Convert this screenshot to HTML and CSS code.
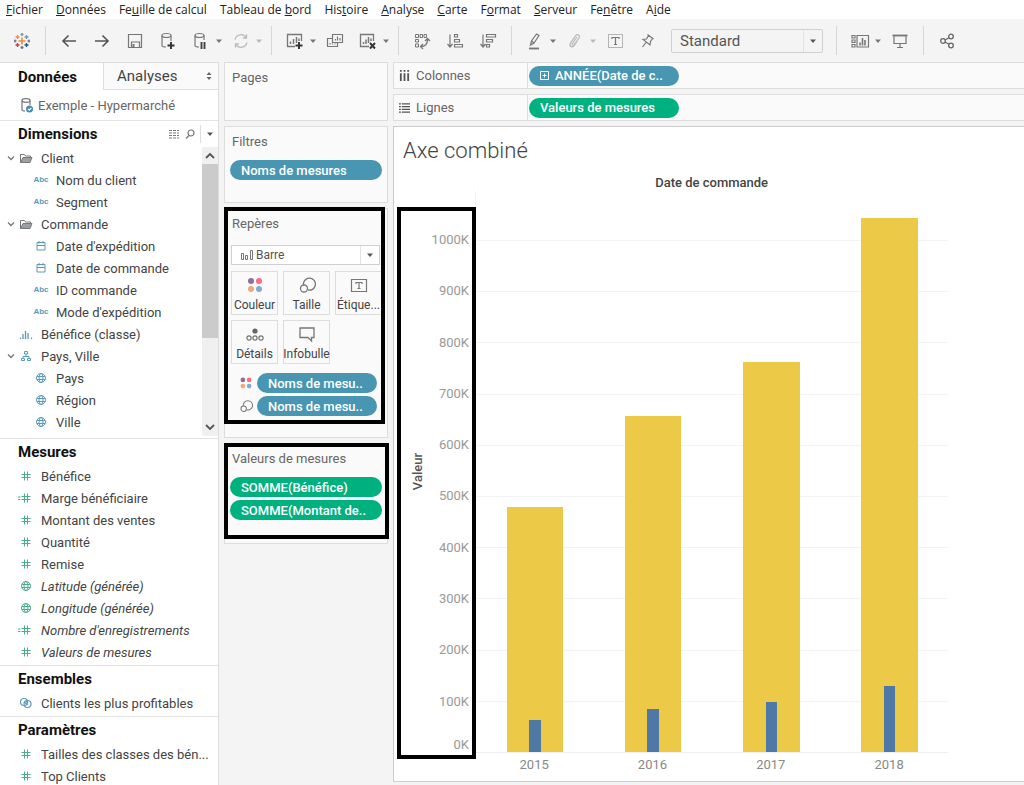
FILE: index.html
```html
<!DOCTYPE html>
<html lang="fr">
<head>
    <meta charset="UTF-8">
    <meta name="viewport" content="width=device-width, initial-scale=1.0">
    <title>Axe combiné</title>
    <link rel="stylesheet" href="styles.css">
</head>
<body>
    <svg class="sprite" aria-hidden="true">
        <symbol id="i-caret" viewBox="0 0 8 8"><path d="M1 2.5h6L4 6z" fill="currentColor"/></symbol>
        <symbol id="i-chevron" viewBox="0 0 8 8"><path d="M1 2.500L4 5.500l3-3" fill="none" stroke="#777" stroke-width="1.300"/></symbol>
        <symbol id="i-folder" viewBox="0 0 14 12"><path d="M1.500 10V2.500h4l1 1.500h5v1.500" fill="none" stroke="#777"/><path d="M1.500 10.500l2.500-5h9l-2 5z" fill="#9aa0a5" stroke="#777"/></symbol>
        <symbol id="i-date" viewBox="0 0 12 12"><path d="M2 2.500h8V10H2zM2 5.500h8M4 1v2.500M8 1v2.500" fill="none" stroke="currentColor"/></symbol>
        <symbol id="i-bins" viewBox="0 0 14 12"><path d="M1.500 11V9.500M4 11V6M6.500 11V3M9 11V5M12.500 11V9.500" fill="none" stroke="currentColor" stroke-width="1.300"/></symbol>
        <symbol id="i-hier" viewBox="0 0 12 12"><path d="M4.500 1.500h3v2.500h-3zM1.500 8.500h3v2h-3zM7.500 8.500h3v2h-3zM6 4v2.500M3 8.500v-2h6v2" fill="none" stroke="currentColor"/></symbol>
        <symbol id="i-globe" viewBox="0 0 12 12"><g fill="none" stroke="currentColor"><circle cx="6" cy="6" r="4.500"/><ellipse cx="6" cy="6" rx="2" ry="4.500"/><path d="M2 4.500h8M2 7.500h8"/></g></symbol>
        <symbol id="i-hash" viewBox="0 0 12 12"><path d="M4.500 1.500v9M7.500 1.500v9M1.500 4.500h9M1.500 7.500h9" fill="none" stroke="currentColor"/></symbol>
        <symbol id="i-calc" viewBox="0 0 18 12"><path d="M7.500 1.500v9M10.500 1.500v9M4.500 4.500h9M4.500 7.500h9M1 5h2.500M1 7.500h2.500" fill="none" stroke="currentColor"/></symbol>
        <symbol id="i-set" viewBox="0 0 14 12"><g fill="none" stroke="currentColor" stroke-width="1.200"><circle cx="5" cy="5" r="3.500"/><circle cx="8.500" cy="7" r="3.500"/><path d="M5.500 5l3 3M7 4l2 2"/></g></symbol>
        <symbol id="i-size" viewBox="0 0 18 18"><g fill="none" stroke="#777" stroke-width="1.300"><path d="M5.500 9a6 6 0 1 1 4.500 5"/><circle cx="6" cy="12.500" r="3.500"/></g></symbol>
        <symbol id="i-color" viewBox="0 0 18 18"><circle cx="5" cy="5" r="3" fill="#8a6f9e"/><circle cx="13" cy="5" r="3" fill="#ff6b82"/><circle cx="5" cy="13" r="3" fill="#f5a67b"/><circle cx="13" cy="13" r="3" fill="#84a9d1"/></symbol>
    </svg>

    <div class="app">
        <nav class="menubar">
            <a href="#"><u>F</u>ichier</a>
            <a href="#"><u>D</u>onnées</a>
            <a href="#">Fe<u>u</u>ille de calcul</a>
            <a href="#">Tableau de <u>b</u>ord</a>
            <a href="#">His<u>t</u>oire</a>
            <a href="#"><u>A</u>nalyse</a>
            <a href="#"><u>C</u>arte</a>
            <a href="#">F<u>o</u>rmat</a>
            <a href="#"><u>S</u>erveur</a>
            <a href="#">Fe<u>n</u>être</a>
            <a href="#">A<u>i</u>de</a>
        </nav>

        <div class="toolbar">
            <button class="tool" aria-label="Accueil">
                <svg viewBox="0 0 20 20" fill="none" stroke-width="1.300">
                    <path d="M10 6.500v7M6.500 10h7" stroke="#eb8b3c" stroke-width="1.600"/>
                    <path d="M5.500 4v4M3.500 6h4" stroke="#eb8b3c"/><path d="M14.500 4v4M12.500 6h4" stroke="#6b9bb3"/>
                    <path d="M5.500 12v4M3.500 14h4" stroke="#c8374f"/><path d="M14.500 12v4M12.500 14h4" stroke="#1f5a86"/>
                    <path d="M10 2v3M8.500 3.500h3" stroke="#7b94ad"/><path d="M10 15v3M8.500 16.500h3" stroke="#6d6ba0"/>
                    <path d="M3 8.500v3M2 10h2.500" stroke="#7b6f9e"/><path d="M17 8.500v3M15.500 10H18" stroke="#7b6f9e"/>
                </svg>
            </button>
            <span class="sep"></span>
            <button class="tool" aria-label="Annuler"><svg viewBox="0 0 20 20" fill="none" stroke="#555" stroke-width="1.600"><path d="M17 10H4M9.500 4.500L4 10l5.500 5.500"/></svg></button>
            <button class="tool" aria-label="Rétablir"><svg viewBox="0 0 20 20" fill="none" stroke="#555" stroke-width="1.600"><path d="M3 10h13M10.500 4.500L16 10l-5.500 5.500"/></svg></button>
            <button class="tool" aria-label="Enregistrer"><svg viewBox="0 0 20 20" fill="none" stroke="#777" stroke-width="1.200"><path d="M3.500 3.500h13v13h-13zM6.500 16v-5h8v5"/><path d="M8.500 13v3" stroke-width="2"/></svg></button>
            <button class="tool" aria-label="Nouvelle source de données"><svg viewBox="0 0 20 20" fill="none" stroke="#777" stroke-width="1.200"><ellipse cx="8.500" cy="4.500" rx="4.500" ry="2"/><path d="M4 4.500v10c0 1 2 1.500 4 1.500M13 4.500V10"/><path d="M13 11v7M9.500 14.500h7" stroke="#333" stroke-width="1.900"/></svg></button>
            <button class="tool" aria-label="Suspendre"><svg viewBox="0 0 20 20" fill="none" stroke="#777" stroke-width="1.200"><ellipse cx="8.500" cy="4.500" rx="4.500" ry="2"/><path d="M4 4.500v10c0 1 2 1.500 4 1.500M13 4.500V9"/><path d="M10.500 11v7M13.500 11v7" stroke="#444" stroke-width="1.900"/></svg></button>
            <button class="caret" aria-label="Options"><svg><use href="#i-caret"/></svg></button>
            <button class="tool" aria-label="Actualiser"><svg viewBox="0 0 20 20" fill="none" stroke="#bbb" stroke-width="1.300"><path d="M4 8.500a6.200 6.200 0 0 1 11.500-1.500M16 11.500A6.200 6.200 0 0 1 4.500 13M15.500 3.500V7H12M4.500 16.500V13H8"/></svg></button>
            <button class="caret faded" aria-label="Options"><svg><use href="#i-caret"/></svg></button>
            <span class="sep"></span>
            <button class="tool" aria-label="Nouvelle feuille"><svg viewBox="0 0 20 20" fill="none" stroke="#777" stroke-width="1.300"><path d="M10 15.500H2.500v-12h14V10"/><path d="M5.500 13v-2.500M8.500 13V8M11.500 12V6M14 10V7.500" stroke-width="1.500"/><path d="M14 11v7M10.500 14.500h7" stroke="#333" stroke-width="1.900"/></svg></button>
            <button class="caret" aria-label="Options"><svg><use href="#i-caret"/></svg></button>
            <button class="tool" aria-label="Dupliquer"><svg viewBox="0 0 20 20" fill="none" stroke="#777" stroke-width="1.200"><path d="M7.500 3.500h10v8h-10zM7 7.500H2.500v8h10v-3.500M10.500 9.500V8M12.500 9.500v-4M15 9.500V7M5 13.500V12M7.500 13.500v-1M10 13.500v-1"/></svg></button>
            <button class="tool" aria-label="Effacer la feuille"><svg viewBox="0 0 20 20" fill="none" stroke="#777" stroke-width="1.300"><path d="M11 15.500H2.500v-12h13V10"/><path d="M5.500 13v-2M8 13V8.500M10.500 12V6M13 10V7.500" stroke-width="1.500"/><path d="M12 12l5 5.500M17 12l-5 5.500" stroke="#333" stroke-width="1.900"/></svg></button>
            <button class="caret" aria-label="Options"><svg><use href="#i-caret"/></svg></button>
            <span class="sep"></span>
            <button class="tool" aria-label="Permuter"><svg viewBox="0 0 20 20" fill="none" stroke="#777"><path d="M3.500 3.500h3v3h-3zM8 3.500h2.500v3H8zM12 3.500h2.500v3H12zM3.500 8.500h3V11h-3zM3.500 13h3v3h-3z"/><path d="M9 15.500c4 0 6.500-2 6.500-7M13 10l2.500-2.500L18 10M11 13l-2.500 2.500L11 18" stroke-width="1.300"/></svg></button>
            <button class="tool" aria-label="Tri croissant"><svg viewBox="0 0 20 20" fill="none" stroke="#777" stroke-width="1.200"><path d="M5 3.500V16M2.500 13L5 16l2.500-3M9.500 3.500h3v2.500h-3zM9.500 8.500h5V11h-5zM9.500 13.500h8V16h-8z"/></svg></button>
            <button class="tool" aria-label="Tri décroissant"><svg viewBox="0 0 20 20" fill="none" stroke="#777" stroke-width="1.200"><path d="M5 3.500V16M2.500 13L5 16l2.500-3M8.500 3.500h9V6h-9zM8.500 8.500h6V11h-6zM8.500 13.500h3V16h-3z"/></svg></button>
            <span class="sep"></span>
            <button class="tool" aria-label="Surligner"><svg viewBox="0 0 20 20" fill="none" stroke="#777" stroke-width="1.200"><path d="M5.500 14l1-4 5-7 2.500 1.500-5 7.500zM6.500 10L9 12"/><path d="M4 17.500h10" stroke-width="1.800"/></svg></button>
            <button class="caret" aria-label="Options"><svg><use href="#i-caret"/></svg></button>
            <button class="tool" aria-label="Grouper"><svg viewBox="0 0 20 20" fill="none" stroke="#bbb" stroke-width="1.300"><path d="M12 6l-4.500 6.500c-.8 1.500.8 2.500 1.800 1.200L14 7c1.500-2.500-1.500-4.500-3.300-2.300L5.500 12c-1.800 3 1.500 5 3.500 2.800l3-4.300"/></svg></button>
            <button class="caret faded" aria-label="Options"><svg><use href="#i-caret"/></svg></button>
            <button class="tool" aria-label="Étiquettes"><svg viewBox="0 0 20 20" fill="none" stroke="#777"><path d="M3.500 3.500h14v13h-14z" stroke-dasharray="1 1"/><path d="M7 8V6.500h7V8M10.500 6.500v7M9 13.500h3" stroke-width="1.200"/></svg></button>
            <button class="tool" aria-label="Épingler"><svg viewBox="0 0 20 20" fill="none" stroke="#777" stroke-width="1.200"><path d="M9.500 3.500l6 4.500M10.500 4.500L8.500 8 5 8.500l7 5.500.500-3.500L14.500 7.500M8 11.500L4.500 16"/></svg></button>
            <div class="select fit">
                <select aria-label="Ajuster"><option>Standard</option></select>
                <svg><use href="#i-caret"/></svg>
            </div>
            <span class="sep"></span>
            <button class="tool" aria-label="Montrer/Masquer les fiches"><svg viewBox="0 0 20 20" fill="none" stroke="#777" stroke-width="1.200"><path d="M2 4.500h3V7H2zM2 9h3v2.500H2zM2 13.500h3V16H2zM7 4.500h11.500V16H7z"/><path d="M10 14.500v-3M12.500 14.500V7M15 14.500V9" stroke-width="1.600"/></svg></button>
            <button class="caret" aria-label="Options"><svg><use href="#i-caret"/></svg></button>
            <button class="tool" aria-label="Mode de présentation"><svg viewBox="0 0 20 20" fill="none" stroke="#777" stroke-width="1.200"><path d="M4 5v7.500h12V5M10 12.500v4M7 16.500h6"/><path d="M2.500 4.500h15" stroke-width="1.800"/></svg></button>
            <span class="sep"></span>
            <button class="tool" aria-label="Partager"><svg viewBox="0 0 20 20" fill="none" stroke="#666" stroke-width="1.300"><circle cx="6" cy="10" r="2.300"/><circle cx="14" cy="5.500" r="2.300"/><circle cx="14" cy="14.500" r="2.300"/><path d="M8 9l4-2.300M8 11l4 2.300"/></svg></button>
        </div>

        <div class="workspace">
            <aside class="data-pane">
                <div class="tabs">
                    <button class="tab active">Données</button>
                    <button class="tab">Analyses
                        <svg viewBox="0 0 8 12" width="8" height="12"><path d="M1.500 5L4 2l2.500 3zM1.500 7L4 10l2.500-3z" fill="#666"/></svg>
                    </button>
                </div>
                <div class="source">
                    <svg viewBox="0 0 14 16" width="14" height="16" fill="none" stroke="#777" stroke-width="1.200"><ellipse cx="6" cy="3.500" rx="4" ry="1.800"/><path d="M2 3.500v9c0 1 1.500 1.500 3 1.500M10 3.500V8"/><circle cx="9.500" cy="12" r="3.500" fill="#3e8bb3" stroke="none"/><path d="M8 12l1.200 1.200L11.300 11" stroke="#fff"/></svg>
                    Exemple - Hypermarché
                </div>

                <section class="group dimensions">
                    <h2>Dimensions
                        <span class="actions">
                            <svg viewBox="0 0 12 10" width="12" height="10" stroke="#777" stroke-width="1.200"><path d="M1 1.500h10M1 4h10M1 6.500h10M1 9h10" stroke-dasharray="3 1"/></svg>
                            <svg viewBox="0 0 10 10" width="10" height="10" fill="none" stroke="#777" stroke-width="1.200"><circle cx="6" cy="4" r="3"/><path d="M4 6.500L1 9.500"/></svg>
                            <button class="menu" aria-label="Menu"><svg><use href="#i-caret"/></svg></button>
                        </span>
                    </h2>
                    <div class="scrollbox">
                        <ul class="fields dim">
                            <li class="parent"><svg class="arrow"><use href="#i-chevron"/></svg><svg class="icon"><use href="#i-folder"/></svg>Client</li>
                            <li class="child"><span class="icon">Abc</span>Nom du client</li>
                            <li class="child"><span class="icon">Abc</span>Segment</li>
                            <li class="parent"><svg class="arrow"><use href="#i-chevron"/></svg><svg class="icon"><use href="#i-folder"/></svg>Commande</li>
                            <li class="child"><svg class="icon"><use href="#i-date"/></svg>Date d'expédition</li>
                            <li class="child"><svg class="icon"><use href="#i-date"/></svg>Date de commande</li>
                            <li class="child"><span class="icon">Abc</span>ID commande</li>
                            <li class="child"><span class="icon">Abc</span>Mode d'expédition</li>
                            <li><svg class="icon"><use href="#i-bins"/></svg>Bénéfice (classe)</li>
                            <li class="parent"><svg class="arrow"><use href="#i-chevron"/></svg><svg class="icon"><use href="#i-hier"/></svg>Pays, Ville</li>
                            <li class="child"><svg class="icon"><use href="#i-globe"/></svg>Pays</li>
                            <li class="child"><svg class="icon"><use href="#i-globe"/></svg>Région</li>
                            <li class="child"><svg class="icon"><use href="#i-globe"/></svg>Ville</li>
                        </ul>
                        <div class="scrollbar">
                            <svg viewBox="0 0 16 17"><path d="M4 11l4-4 4 4" fill="none" stroke="#555" stroke-width="1.800"/></svg>
                            <div class="thumb"></div>
                            <svg viewBox="0 0 16 17"><path d="M4 6l4 4 4-4" fill="none" stroke="#555" stroke-width="1.800"/></svg>
                        </div>
                    </div>
                </section>

                <section class="group">
                    <h2>Mesures</h2>
                    <ul class="fields mes">
                        <li><svg class="icon"><use href="#i-hash"/></svg>Bénéfice</li>
                        <li><svg class="icon"><use href="#i-calc"/></svg>Marge bénéficiaire</li>
                        <li><svg class="icon"><use href="#i-hash"/></svg>Montant des ventes</li>
                        <li><svg class="icon"><use href="#i-hash"/></svg>Quantité</li>
                        <li><svg class="icon"><use href="#i-hash"/></svg>Remise</li>
                        <li class="generated"><svg class="icon"><use href="#i-globe"/></svg>Latitude (générée)</li>
                        <li class="generated"><svg class="icon"><use href="#i-globe"/></svg>Longitude (générée)</li>
                        <li class="generated"><svg class="icon"><use href="#i-calc"/></svg>Nombre d'enregistrements</li>
                        <li class="generated"><svg class="icon"><use href="#i-hash"/></svg>Valeurs de mesures</li>
                    </ul>
                </section>

                <section class="group">
                    <h2>Ensembles</h2>
                    <ul class="fields dim">
                        <li><svg class="icon"><use href="#i-set"/></svg>Clients les plus profitables</li>
                    </ul>
                </section>

                <section class="group">
                    <h2>Paramètres</h2>
                    <ul class="fields mes">
                        <li><svg class="icon"><use href="#i-hash"/></svg>Tailles des classes des bén...</li>
                        <li><svg class="icon"><use href="#i-hash"/></svg>Top Clients</li>
                    </ul>
                </section>
            </aside>

            <div class="cards">
                <section class="card pages"><h3>Pages</h3></section>
                <section class="card filters">
                    <h3>Filtres</h3>
                    <button class="pill blue">Noms de mesures</button>
                </section>
                <section class="card marks">
                    <h3>Repères</h3>
                    <div class="select mark-type">
                        <svg class="bars" viewBox="0 0 14 12" fill="none" stroke="#777"><path d="M1.500 4.500h2v6h-2zM5.500 6.500h2v4h-2zM10.500 1.500h2v9h-2z"/></svg>
                        <select aria-label="Type de repère"><option>Barre</option></select>
                        <svg><use href="#i-caret"/></svg>
                    </div>
                    <div class="mark-buttons">
                        <button><svg><use href="#i-color"/></svg>Couleur</button>
                        <button><svg><use href="#i-size"/></svg>Taille</button>
                        <button><svg viewBox="0 0 18 18" fill="none" stroke="#777" stroke-width="1.200"><path d="M1.500 3.500h15v12h-15zM6 8V6.500h6V8M9 6.500V12M7.500 12.500h3"/></svg>Étique...</button>
                        <button><svg viewBox="0 0 18 18" fill="none" stroke="#777" stroke-width="1.200"><circle cx="9" cy="6" r="2.600" fill="#666" stroke="none"/><circle cx="3" cy="13" r="2.100"/><circle cx="9" cy="13" r="2.100"/><circle cx="15" cy="13" r="2.100"/></svg>Détails</button>
                        <button><svg viewBox="0 0 18 18" fill="none" stroke="#777" stroke-width="1.300"><path d="M2 3h14v9.500h-2.500v3.500L10 12.500H2z"/></svg>Infobulle</button>
                    </div>
                    <div class="mark-field"><svg><use href="#i-color"/></svg><button class="pill blue">Noms de mesu..</button></div>
                    <div class="mark-field"><svg><use href="#i-size"/></svg><button class="pill blue">Noms de mesu..</button></div>
                </section>
                <section class="card values">
                    <h3>Valeurs de mesures</h3>
                    <button class="pill green">SOMME(Bénéfice)</button>
                    <button class="pill green">SOMME(Montant de..</button>
                </section>
            </div>

            <main class="view">
                <div class="shelf">
                    <div class="shelf-name">
                        <svg viewBox="0 0 12 12" stroke="#555" stroke-width="2"><path d="M2 3.500V12M6 3.500V12M10 3.500V12M2 0v2M6 0v2M10 0v2"/></svg>
                        Colonnes
                    </div>
                    <button class="pill blue"><svg viewBox="0 0 9 9" fill="none" stroke="#fff"><path d="M.5.5h8v8h-8zM2.500 4.500h4M4.500 2.500v4"/></svg>ANNÉE(Date de c..</button>
                </div>
                <div class="shelf">
                    <div class="shelf-name">
                        <svg viewBox="0 0 12 12" stroke="#555" stroke-width="1.500"><path d="M0 2h2M0 5h2M0 8h2M0 11h2M3 2h9M3 5h9M3 8h9M3 11h9"/></svg>
                        Lignes
                    </div>
                    <button class="pill green">Valeurs de mesures</button>
                </div>

                <div class="sheet">
                    <h1>Axe combiné</h1>
                    <div class="chart">
                        <div class="chart-title">Date de commande</div>
                        <div class="y-axis">
                            <div class="y-name">Valeur</div>
                            <div class="ticks">
                                <div><span>1000K</span></div>
                                <div><span>900K</span></div>
                                <div><span>800K</span></div>
                                <div><span>700K</span></div>
                                <div><span>600K</span></div>
                                <div><span>500K</span></div>
                                <div><span>400K</span></div>
                                <div><span>300K</span></div>
                                <div><span>200K</span></div>
                                <div><span>100K</span><span>0K</span></div>
                            </div>
                        </div>
                        <div class="plot">
                            <div class="gridlines"><i></i><i></i><i></i><i></i><i></i><i></i><i></i><i></i><i></i><i></i></div>
                            <div class="bars-area">
                                <div class="year"><div class="sales" style="height: 43.6%"><div class="profit" style="height: 13.1%"></div></div></div>
                                <div class="year"><div class="sales" style="height: 59.9%"><div class="profit" style="height: 12.8%"></div></div></div>
                                <div class="year"><div class="sales" style="height: 69.6%"><div class="profit" style="height: 12.9%"></div></div></div>
                                <div class="year"><div class="sales" style="height: 95.2%"><div class="profit" style="height: 12.4%"></div></div></div>
                            </div>
                        </div>
                        <div class="x-axis"><span>2015</span><span>2016</span><span>2017</span><span>2018</span></div>
                    </div>
                </div>
            </main>
        </div>
    </div>
</body>
</html>
```
FILE: styles.css
```css
* {
    box-sizing: border-box;
}
body {
    margin: 0;
    font-family: Roboto, Arial, sans-serif;
    font-size: 13px;
    color: #444;
    background: #f4f4f4;
}
h1, h2, h3, ul {
    margin: 0;
    padding: 0;
    list-style: none;
}
button, select {
    font: inherit;
    color: inherit;
    background: none;
    border: none;
    padding: 0;
    cursor: pointer;
}
svg {
    flex: none;
}
.sprite {
    display: none;
}
.app {
    display: flex;
    flex-direction: column;
    height: 100vh;
    overflow: hidden;
}

/* menu */
.menubar {
    display: flex;
    gap: 13px;
    height: 19px;
    flex: none;
    padding-left: 6px;
    background: #fff;
    font-family: "Open Sans", "Noto Sans", sans-serif;
    font-size: 12px;
    line-height: 20px;
}
.menubar a {
    color: #222;
    text-decoration: none;
    white-space: nowrap;
}

/* toolbar */
.toolbar {
    display: flex;
    align-items: center;
    gap: 13px;
    height: 43px;
    flex: none;
    padding-left: 12px;
}
.tool, .tool svg {
    display: block;
    width: 20px;
    height: 20px;
    flex: none;
}
.caret {
    width: 16px;
    height: 20px;
    margin: 0 -9px 0 -13px;
    color: #777;
}
.caret svg, .menu svg, .select svg {
    width: 8px;
    height: 8px;
}
.caret.faded {
    color: #bbb;
}
.sep {
    width: 1px;
    height: 29px;
    background: #d6d6d6;
}
.select {
    display: flex;
    align-items: center;
    border: 1px solid #d0d0d0;
    color: #555;
}
.select select {
    appearance: none;
    flex: 1;
    min-width: 0;
    height: 100%;
    border-right: 1px solid #e2e2e2;
    outline: none;
}
.select svg {
    margin: 0 5px;
}
.fit {
    width: 152px;
    height: 24px;
    border-radius: 2px;
    font-size: 15px;
}
.fit select {
    padding-left: 8px;
}

.workspace {
    display: grid;
    grid-template-columns: 219px 164px minmax(0, 1fr);
    gap: 5px;
    flex: 1;
    min-height: 0;
}

/* data pane */
.data-pane {
    background: #fff;
    border-top: 1px solid #ddd;
    border-right: 1px solid #ddd;
    overflow: hidden;
}
.tabs {
    display: flex;
    height: 27px;
    font-size: 15px;
}
.tab {
    width: 103px;
    text-align: left;
    padding-left: 18px;
}
.tab.active {
    font-weight: bold;
    color: #111;
}
.tab:not(.active) {
    display: flex;
    align-items: center;
    justify-content: space-between;
    flex: 1;
    padding: 0 5px 0 13px;
    background: #fafafa;
    border-left: 1px solid #ddd;
    border-bottom: 1px solid #ddd;
}
.source {
    display: flex;
    align-items: center;
    gap: 4px;
    height: 30px;
    padding-left: 20px;
    color: #666;
}
.group {
    border-top: 1px solid #e2e2e2;
    padding-bottom: 2px;
}
.group h2 {
    display: flex;
    align-items: center;
    justify-content: space-between;
    height: 26px;
    padding-left: 18px;
    font-size: 15px;
    color: #111;
}
.actions {
    display: flex;
    align-items: center;
    gap: 5px;
}
.menu {
    display: flex;
    align-items: center;
    height: 18px;
    padding: 0 4px 0 5px;
    border-left: 1px solid #ddd;
    color: #555;
}
.scrollbox {
    display: flex;
    height: 289px;
}
.fields {
    flex: 1;
    color: #444;
}
.fields li {
    display: flex;
    align-items: center;
    height: 22px;
    padding-left: 17px;
    white-space: nowrap;
}
.fields .parent {
    padding-left: 7px;
}
.fields .child {
    padding-left: 32px;
}
.arrow {
    width: 8px;
    height: 8px;
    margin-right: 2px;
}
.icon {
    width: 18px;
    height: 12px;
    margin-right: 6px;
    text-align: center;
    font-family: "Liberation Sans", sans-serif;
    font-size: 8px;
    font-weight: bold;
    line-height: 12px;
}
.dim .icon {
    color: #5a9ab8;
}
.mes .icon {
    color: #4bae8a;
}
.generated {
    font-style: italic;
}
.scrollbar {
    display: flex;
    flex-direction: column;
    justify-content: space-between;
    width: 16px;
    background: #f0f0f0;
}
.scrollbar svg {
    height: 17px;
}
.thumb {
    height: 174px;
    margin-bottom: auto;
    background: #cbcbcb;
}

/* cards */
.cards {
    display: flex;
    flex-direction: column;
    gap: 5px;
}
.card {
    position: relative;
    display: flex;
    flex-direction: column;
    padding: 0 5px;
    background: #fafafa;
    border: 1px solid #ddd;
}
.card h3 {
    padding-left: 2px;
    font-size: 13px;
    font-weight: normal;
    line-height: 30px;
    color: #666;
}
.pages {
    min-height: 59px;
}
.filters {
    padding-bottom: 22px;
}
.filters h3 {
    margin-bottom: 3px;
}
.marks {
    padding-bottom: 18px;
}
.values {
    gap: 3px;
    padding-bottom: 23px;
}
.pill {
    display: flex;
    align-items: center;
    gap: 6px;
    height: 20px;
    flex: none;
    padding: 0 11px;
    border-radius: 10px;
    color: #fff;
    font-size: 13px;
    font-weight: 500;
    white-space: nowrap;
}
.blue {
    background: #4996b2;
}
.green {
    background: #00b180;
}
.mark-type {
    height: 20px;
    margin: 6px 2px 6px 1px;
    background: #fff;
    font-size: 12px;
}
.mark-type .bars {
    width: 14px;
    height: 12px;
    margin: 0 2px 0 8px;
}
.mark-buttons {
    display: grid;
    grid-template-columns: repeat(3, 1fr);
    gap: 5px;
    margin: 0 0 9px 1px;
}
.mark-buttons button {
    display: flex;
    flex-direction: column;
    align-items: center;
    justify-content: space-between;
    min-width: 0;
    height: 44px;
    padding: 4px 0 2px;
    border: 1px solid #ddd;
    font-size: 12px;
    line-height: 14px;
}
.mark-buttons svg {
    width: 18px;
    height: 18px;
}
.mark-field {
    display: flex;
    align-items: center;
    gap: 4px;
    margin: 0 5px 3px 9px;
}
.mark-field svg {
    width: 14px;
    height: 14px;
}
.mark-field .pill {
    flex: 1;
}

/* black frames drawn over the view */
.marks::after, .values::after, .y-axis::after {
    content: "";
    position: absolute;
    border: 4px solid #000;
    pointer-events: none;
}
.marks::after {
    inset: -2px 2px 13px -1px;
}
.values::after {
    inset: -1px -2px 4px -1px;
}

/* view */
.view {
    display: flex;
    flex-direction: column;
    gap: 5px;
    padding-bottom: 3px;
    min-height: 0;
}
.shelf {
    display: flex;
    align-items: center;
    height: 27px;
    flex: none;
    background: #fafafa;
    border: 1px solid #ddd;
    border-right: none;
}
.shelf-name {
    display: flex;
    align-items: center;
    gap: 6px;
    width: 134px;
    height: 100%;
    padding-left: 5px;
    border-right: 1px solid #ddd;
    color: #666;
}
.shelf-name svg {
    width: 11px;
    height: 11px;
}
.shelf .pill {
    width: 150px;
    margin-left: 1px;
}
.shelf .pill svg {
    width: 9px;
    height: 9px;
}
.sheet {
    display: flex;
    flex-direction: column;
    flex: 1;
    min-height: 0;
    padding: 0 12% 7px 3px;
    background: #fff;
    border: 1px solid #ccc;
    border-right: none;
}
.sheet h1 {
    padding-left: 6px;
    font-size: 22px;
    font-weight: 300;
    line-height: 48px;
}
.chart {
    display: grid;
    grid-template: 16px minmax(0, 1fr) 21px / 78px minmax(0, 1fr);
    flex: 1;
    min-height: 0;
}
.chart-title {
    grid-column: 2;
    text-align: center;
    font-weight: 500;
    line-height: 16px;
}
.y-axis {
    position: relative;
    grid-column: 1;
    display: flex;
    align-items: center;
    justify-content: space-between;
    padding: 0 6px 0 13px;
    color: #999;
}
.y-axis::after {
    inset: 16px -1px -6px 0;
}
.y-name {
    writing-mode: vertical-rl;
    transform: rotate(180deg);
    font-weight: 500;
    color: #555;
}
.ticks, .gridlines {
    display: flex;
    flex-direction: column;
    height: 100%;
    padding-top: 49px;
}
.ticks div {
    display: flex;
    flex-direction: column;
    justify-content: space-between;
    flex: 1;
    text-align: right;
    line-height: 16px;
}
.ticks span:first-child {
    margin-top: -8px;
}
.plot {
    display: grid;
    grid-template: minmax(0, 1fr) / minmax(0, 1fr);
    border-left: 1px solid #f3f3f3;
    border-bottom: 1px solid #eee;
}
.gridlines, .bars-area {
    grid-area: 1 / 1;
}
.gridlines i {
    flex: 1;
    border-top: 1px solid #f3f3f3;
}
.bars-area, .x-axis {
    display: grid;
    grid-template-columns: repeat(4, 1fr);
}
.year {
    display: flex;
    align-items: flex-end;
    justify-content: center;
}
.sales {
    display: flex;
    align-items: flex-end;
    justify-content: center;
    width: 48%;
    background: #ecc947;
}
.profit {
    width: 20%;
    background: #4e79a7;
}
.x-axis {
    grid-column: 2;
    align-items: end;
    text-align: center;
    line-height: 18px;
    color: #888;
}
```
